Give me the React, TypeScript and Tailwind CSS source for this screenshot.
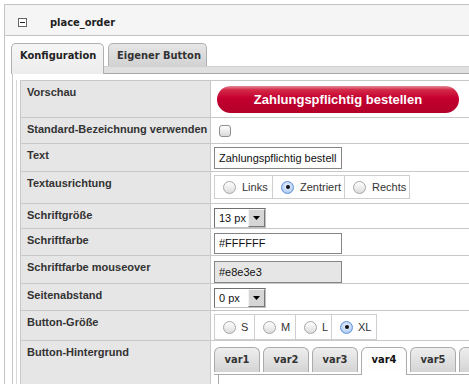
import React from "react";

const dv = "font-['DejaVu_Sans_Condensed','DejaVu_Sans',sans-serif]";
const ls = "font-['Liberation_Sans',Arial,sans-serif]";

function Radio({ checked }: { checked?: boolean }) {
  return checked ? (
    <span className="flex h-[13px] w-[13px] shrink-0 items-center justify-center rounded-full border border-[#5f92d8] bg-[radial-gradient(circle_at_50%_40%,#eef5ff_0%,#bcd4f3_60%,#8fb4e6_100%)]">
      <span className="h-[4px] w-[4px] rounded-full bg-[#111]" />
    </span>
  ) : (
    <span className="block h-[13px] w-[13px] shrink-0 rounded-full border border-[#a6a6a6] bg-gradient-to-b from-[#ffffff] to-[#dcdcdc]" />
  );
}

function Select({ value }: { value: string }) {
  return (
    <div className="flex h-[20px] w-[52px] border border-t-[#707070] border-l-[#707070] border-b-[#c0c0c0] border-r-[#c0c0c0] bg-white">
      <span className={`flex-1 pl-[4px] text-[11px] leading-[18px] text-[#111] ${ls}`}>{value}</span>
      <span className="flex w-[17px] items-center justify-center border border-t-[#f4f4f4] border-l-[#f4f4f4] border-b-[#777] border-r-[#777] bg-[#d6d6d6]">
        <svg width="7" height="4" viewBox="0 0 7 4">
          <polygon points="0,0 7,0 3.5,4" fill="#000" />
        </svg>
      </span>
    </div>
  );
}

function Row({
  label,
  h,
  children,
}: {
  label: string;
  h: string;
  children?: React.ReactNode;
}) {
  return (
    <div className={`flex border-b border-[#c8c8c8] ${h}`}>
      <div
        className={`w-[190px] shrink-0 border-r border-[#c8c8c8] bg-[#e6e6e6] pl-[6px] pt-[5px] text-[11px] font-bold leading-[13px] text-[#333] ${ls}`}
      >
        {label}
      </div>
      <div className="flex-1 bg-white">{children}</div>
    </div>
  );
}

function RadioGroup({
  items,
  h,
  pl,
  gap,
}: {
  items: { label: string; checked?: boolean; w: string }[];
  h: string;
  pl: string;
  gap: string;
}) {
  return (
    <div className={`ml-[3px] flex border border-[#cfcfcf] bg-white ${h} w-fit`}>
      {items.map((it, i) => (
        <div
          key={it.label}
          className={`flex items-center ${pl} ${gap} ${it.w} ${i > 0 ? "border-l border-[#cfcfcf]" : ""}`}
        >
          <Radio checked={it.checked} />
          <span className={`text-[11px] leading-[13px] text-[#333] ${ls}`}>{it.label}</span>
        </div>
      ))}
    </div>
  );
}

export default function App() {
  const vars = ["var1", "var2", "var3", "var4", "var5", ""];
  return (
    <div className="h-[384px] w-[469px] overflow-hidden bg-white">
      <div className="w-[560px] pl-[4px] pt-[4px]">
        <div className="border-l border-t border-[#c4c4c4]">
          {/* header */}
          <div className="flex h-[31px] items-start border-b border-[#c4c4c4] bg-[#f5f5f5] pl-[13px]">
            <span className="mt-[13px] flex h-[9px] w-[9px] items-center justify-center border border-[#666] bg-white">
              <span className="h-[1px] w-[5px] bg-[#222]" />
            </span>
            <span className={`ml-[23px] mt-[11px] text-[11px] font-bold leading-[13px] text-[#222] ${dv}`}>
              place_order
            </span>
          </div>

          {/* body */}
          <div className="pl-[6px] pt-[7px]">
            {/* tab strip */}
            <div className="flex h-[23px] items-start gap-[4px]">
              <div
                className={`relative z-10 mb-[-8px] h-[31px] w-[93px] rounded-t-[5px] border border-b-0 border-[#b0b0b0] bg-gradient-to-b from-[#f6f6f6] to-[#ececec] pl-[8px] pt-[5px] text-[11px] font-bold leading-[13px] text-[#222] ${dv}`}
              >
                Konfiguration
              </div>
              <div
                className={`h-[23px] w-[99px] rounded-t-[5px] border border-b-0 border-[#b0b0b0] bg-gradient-to-b from-[#e6e6e6] to-[#d2d2d2] pl-[8px] pt-[5px] text-[11px] font-bold leading-[13px] text-[#333] ${dv}`}
              >
                Eigener Button
              </div>
            </div>
            <div className="h-[8px] border-b border-t border-b-[#a8a8a8] border-t-[#d0d0d0] bg-[#e0e0e0]" />

            {/* panel */}
            <div className="ml-[1px] border-l border-[#c8c8c8] pl-[3px] pt-[6px]">
              <div className="border-l border-[#d8d8d8] pl-[3px]">
                <div className="border-l border-t border-[#c8c8c8]">
                  <Row label="Vorschau" h="h-[37px]">
                    <div
                      className={`ml-[6px] mt-[5px] flex h-[27px] w-[242px] items-center justify-center rounded-full bg-[linear-gradient(to_bottom,#e58a99_0%,#d42a48_14%,#c4002f_45%,#b3002a_100%)] text-[13px] font-bold text-white ${ls}`}
                    >
                      Zahlungspflichtig bestellen
                    </div>
                  </Row>
                  <Row label="Standard-Bezeichnung verwenden" h="h-[26px]">
                    <span className="ml-[8px] mt-[7px] block h-[12px] w-[12px] rounded-[3px] border border-[#8e8e8e] bg-gradient-to-b from-[#ffffff] to-[#dadada]" />
                  </Row>
                  <Row label="Text" h="h-[28px]">
                    <div
                      className={`ml-[3px] mt-[3px] h-[22px] w-[128px] overflow-hidden whitespace-nowrap border border-[#858585] bg-white pl-[4px] text-[11px] leading-[20px] text-[#111] ${ls}`}
                    >
                      Zahlungspflichtig bestell
                    </div>
                  </Row>
                  <Row label="Textausrichtung" h="h-[32px]">
                    <div className="mt-[3px]">
                      <RadioGroup
                        h="h-[24px]"
                        pl="pl-[8px]"
                        gap="gap-[6px]"
                        items={[
                          { label: "Links", w: "w-[57px]" },
                          { label: "Zentriert", checked: true, w: "w-[72px]" },
                          { label: "Rechts", w: "w-[65px]" },
                        ]}
                      />
                    </div>
                  </Row>
                  <Row label="Schriftgröße" h="h-[25px]">
                    <div className="ml-[3px] mt-[4px]">
                      <Select value="13 px" />
                    </div>
                  </Row>
                  <Row label="Schriftfarbe" h="h-[27px]">
                    <div
                      className={`ml-[3px] mt-[4px] h-[21px] w-[128px] border border-[#858585] bg-white pl-[4px] text-[11px] leading-[19px] text-[#111] ${ls}`}
                    >
                      #FFFFFF
                    </div>
                  </Row>
                  <Row label="Schriftfarbe mouseover" h="h-[28px]">
                    <div
                      className={`ml-[3px] mt-[5px] h-[22px] w-[128px] border border-[#858585] bg-[#e6e6e6] pl-[4px] text-[11px] leading-[20px] text-[#111] ${ls}`}
                    >
                      #e8e3e3
                    </div>
                  </Row>
                  <Row label="Seitenabstand" h="h-[27px]">
                    <div className="ml-[3px] mt-[4px]">
                      <Select value="0 px" />
                    </div>
                  </Row>
                  <Row label="Button-Größe" h="h-[30px]">
                    <div className="mt-[3px]">
                      <RadioGroup
                        h="h-[26px]"
                        pl="pl-[8px]"
                        gap="gap-[5px]"
                        items={[
                          { label: "S", w: "w-[39px]" },
                          { label: "M", w: "w-[41px]" },
                          { label: "L", w: "w-[36px]" },
                          { label: "XL", checked: true, w: "w-[45px]" },
                        ]}
                      />
                    </div>
                  </Row>
                  <Row label="Button-Hintergrund" h="h-[60px]">
                    <div className="ml-[3px] mt-[6px]">
                      <div className="flex h-[25px] items-start gap-[3px]">
                        {vars.map((v, i) =>
                          v === "var4" ? (
                            <div
                              key={i}
                              className={`relative z-10 mb-[-3px] h-[28px] w-[46px] rounded-t-[6px] border border-b-0 border-[#ababab] bg-gradient-to-b from-[#fbfbfb] to-[#ffffff] pt-[5px] text-center text-[11px] font-bold leading-[13px] text-[#111] ${dv}`}
                            >
                              {v}
                            </div>
                          ) : (
                            <div
                              key={i}
                              className={`h-[25px] w-[46px] shrink-0 rounded-t-[6px] border border-b-0 border-[#ababab] bg-gradient-to-b from-[#eeeeee] to-[#d4d4d4] pt-[5px] text-center text-[11px] font-bold leading-[13px] text-[#333] ${dv}`}
                            >
                              {v}
                            </div>
                          )
                        )}
                      </div>
                      <div className="h-[3px] border-b border-[#ababab]" />
                      <div className="ml-[4px] h-[20px] border-l border-[#ababab]" />
                    </div>
                  </Row>
                </div>
              </div>
            </div>
          </div>
        </div>
      </div>
    </div>
  );
}
